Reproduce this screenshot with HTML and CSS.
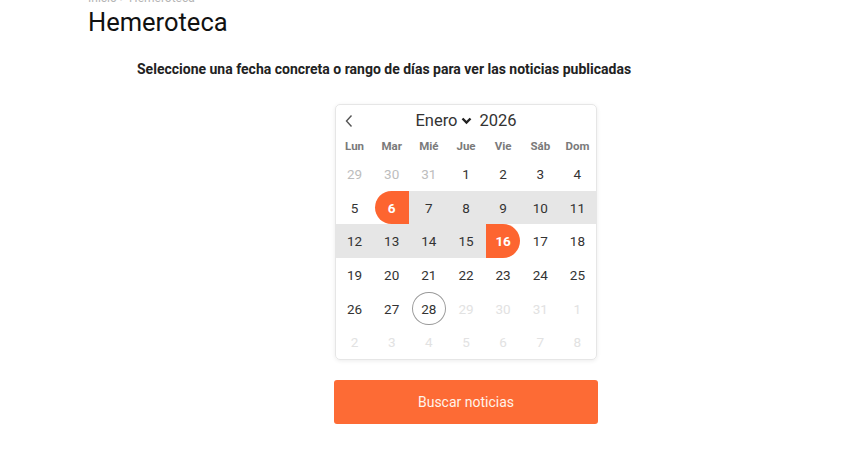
FILE: index.html
```html
<!DOCTYPE html>
<html lang="es">
<head>
  <meta charset="UTF-8" />
  <title>Hemeroteca</title>
  <link rel="stylesheet" href="styles.css">
</head>
<body>
  <div class="page">
    <div class="breadcrumb">Inicio &gt; Hemeroteca</div>
    <h1>Hemeroteca</h1>
    <p class="intro">Seleccione una fecha concreta o rango de días para ver las noticias publicadas</p>

    <div class="picker">
      <div class="calendar">
        <div class="cal-head">
          <button class="prev" aria-label="Mes anterior">
            <svg width="10" height="14" viewBox="0 0 10 14"><path d="M7.5 1.5 L2.5 7 L7.5 12.5" fill="none" stroke="#555" stroke-width="1.4"/></svg>
          </button>
          <div class="month">
            <span>Enero</span>
            <svg width="11" height="8" viewBox="0 0 11 8"><path d="M1.5 1.5 L5.5 5.5 L9.5 1.5" fill="none" stroke="#222" stroke-width="2.4"/></svg>
            <span class="year">2026</span>
          </div>
        </div>

        <div class="weekdays">
          <span>Lun</span><span>Mar</span><span>Mié</span><span>Jue</span><span>Vie</span><span>Sáb</span><span>Dom</span>
        </div>

        <div class="days">
          <div class="cell other"><span>29</span></div>
          <div class="cell other"><span>30</span></div>
          <div class="cell other"><span>31</span></div>
          <div class="cell"><span>1</span></div>
          <div class="cell"><span>2</span></div>
          <div class="cell"><span>3</span></div>
          <div class="cell"><span>4</span></div>

          <div class="cell"><span>5</span></div>
          <div class="cell start"><span>6</span></div>
          <div class="cell range"><span>7</span></div>
          <div class="cell range"><span>8</span></div>
          <div class="cell range"><span>9</span></div>
          <div class="cell range"><span>10</span></div>
          <div class="cell range"><span>11</span></div>

          <div class="cell range"><span>12</span></div>
          <div class="cell range"><span>13</span></div>
          <div class="cell range"><span>14</span></div>
          <div class="cell range"><span>15</span></div>
          <div class="cell end"><span>16</span></div>
          <div class="cell"><span>17</span></div>
          <div class="cell"><span>18</span></div>

          <div class="cell"><span>19</span></div>
          <div class="cell"><span>20</span></div>
          <div class="cell"><span>21</span></div>
          <div class="cell"><span>22</span></div>
          <div class="cell"><span>23</span></div>
          <div class="cell"><span>24</span></div>
          <div class="cell"><span>25</span></div>

          <div class="cell"><span>26</span></div>
          <div class="cell"><span>27</span></div>
          <div class="cell today"><span>28</span></div>
          <div class="cell disabled"><span>29</span></div>
          <div class="cell disabled"><span>30</span></div>
          <div class="cell disabled"><span>31</span></div>
          <div class="cell disabled"><span>1</span></div>

          <div class="cell disabled"><span>2</span></div>
          <div class="cell disabled"><span>3</span></div>
          <div class="cell disabled"><span>4</span></div>
          <div class="cell disabled"><span>5</span></div>
          <div class="cell disabled"><span>6</span></div>
          <div class="cell disabled"><span>7</span></div>
          <div class="cell disabled"><span>8</span></div>
        </div>
      </div>

      <button class="search">Buscar noticias</button>
    </div>
  </div>
</body>
</html>
```

FILE: styles.css
```css
body {
  margin: 0;
  background: #fff;
  color: #222;
  font-family: Roboto, "Liberation Sans", Arial, sans-serif;
}

.page {
  padding-left: 88px;
}

.breadcrumb {
  margin-top: -10px;
  height: 16px;
  line-height: 16px;
  font-size: 12px;
  color: #b5b5b5;
}

h1 {
  margin: 0;
  padding-top: 1px;
  font-size: 25.5px;
  line-height: 30px;
  font-weight: 400;
  color: #111;
}

.intro {
  margin: 23px 0 0 49px;
  font-size: 14px;
  line-height: 18px;
  font-weight: 700;
  color: #222;
}

.picker {
  width: 264px;
  margin: 26px 0 0 246px;
}

.calendar {
  margin: 0 1px;
  border: 1px solid #e6e6e6;
  border-radius: 5px;
  box-shadow: 0 1px 4px rgba(0, 0, 0, 0.08);
  overflow: hidden;
}

.cal-head {
  position: relative;
  height: 30px;
  display: flex;
  align-items: center;
  justify-content: center;
}

.prev {
  position: absolute;
  left: 8px;
  top: 9px;
  padding: 0;
  border: 0;
  background: none;
  display: flex;
}

.month {
  display: flex;
  align-items: center;
  margin-left: 0;
  padding-top: 1px;
  font-size: 16.5px;
  color: #333;
}

.month svg {
  margin: 1px 0 0 3px;
}

.month .year {
  margin-left: 8px;
}

.weekdays {
  display: grid;
  grid-template-columns: repeat(7, 1fr);
  height: 22px;
  align-items: center;
  font-size: 11.5px;
  font-weight: 700;
  color: #7a7a7a;
  text-align: center;
}

.days {
  display: grid;
  grid-template-columns: repeat(7, 1fr);
  grid-auto-rows: 33.7px;
}

.cell {
  display: flex;
  justify-content: center;
  font-size: 13.5px;
  color: #333;
}

.cell span {
  width: 34px;
  display: flex;
  align-items: center;
  justify-content: center;
  box-sizing: border-box;
}

.cell.other {
  color: #bdbdbd;
}

.cell.disabled {
  color: #e2e2e2;
}

.cell.range {
  background: #e6e6e6;
}

.cell.start {
  background: linear-gradient(to right, transparent 50%, #e6e6e6 50%);
}

.cell.end {
  background: linear-gradient(to right, #e6e6e6 50%, transparent 50%);
}

.cell.start span,
.cell.end span {
  background: #fd6530;
  color: #fff;
  font-weight: 700;
}

.cell.start span {
  border-radius: 17px 0 0 17px;
}

.cell.end span {
  border-radius: 0 17px 17px 0;
}

.cell.today span {
  border: 1.5px solid #9a9a9a;
  border-radius: 50%;
}

.search {
  display: block;
  width: 100%;
  height: 44px;
  margin-top: 20px;
  border: 0;
  border-radius: 3px;
  background: #fd6b35;
  color: #fff3ea;
  font-family: Roboto, "Liberation Sans", Arial, sans-serif;
  font-size: 14px;
  cursor: pointer;
}
```
